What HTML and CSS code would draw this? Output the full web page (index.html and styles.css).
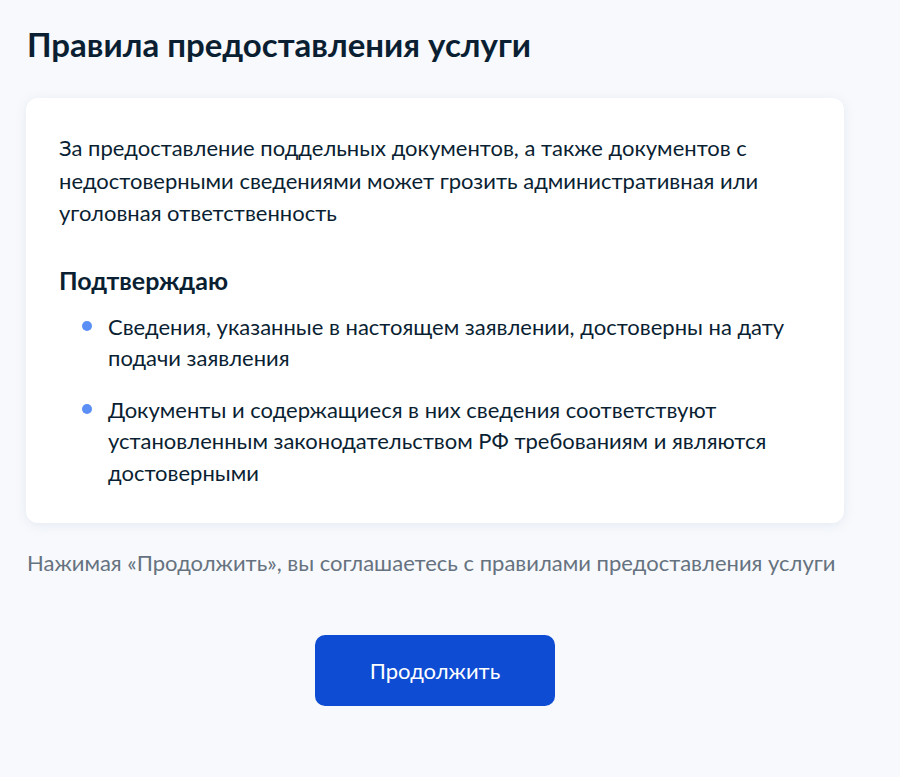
FILE: index.html
```html
<!DOCTYPE html>
<html lang="ru">
<head>
<meta charset="utf-8">
<link rel="stylesheet" href="styles.css">
</head>
<body>
<main class="page">
  <h1 class="title">Правила предоставления услуги</h1>
  <section class="card">
    <p class="warn">За предоставление поддельных документов, а также документов с недостоверными сведениями может грозить административная или уголовная ответственность</p>
    <h2 class="sub">Подтверждаю</h2>
    <ul class="list">
      <li>Сведения, указанные в настоящем заявлении, достоверны на дату подачи заявления</li>
      <li>Документы и содержащиеся в них сведения соответствуют установленным законодательством РФ требованиям и являются достоверными</li>
    </ul>
  </section>
  <p class="note">Нажимая «Продолжить», вы соглашаетесь с правилами предоставления услуги</p>
  <div class="actions">
    <button class="btn">Продолжить</button>
  </div>
</main>
</body>
</html>
```
FILE: styles.css
```css
html, body {
  margin: 0;
  padding: 0;
}
body {
  background: #f7f9fc;
  font-family: Lato, "Noto Sans", sans-serif;
  color: #0b1f33;
  width: 900px;
  height: 777px;
  overflow: hidden;
}
.page {
  padding: 22px 56px 0 26px;
}
.title {
  margin: 0 0 0 1px;
  font-size: 33px;
  font-weight: 700;
  line-height: 44px;
}
.card {
  margin-top: 32px;
  background: #fff;
  border-radius: 12px;
  box-shadow: 0 2px 12px rgba(160, 175, 200, 0.2);
  padding: 34px 33px 35px 33px;
}
.warn {
  margin: 0;
  font-size: 22px;
  line-height: 32.5px;
}
.sub {
  margin: 34px 0 15px;
  font-size: 25px;
  font-weight: 700;
  line-height: 32px;
}
.list {
  margin: 0;
  padding: 0;
  list-style: none;
}
.list li {
  position: relative;
  padding-left: 49px;
  font-size: 22px;
  line-height: 31.5px;
  margin-bottom: 20px;
}
.list li:last-child {
  margin-bottom: 0;
}
.list li::before {
  content: "";
  position: absolute;
  left: 23px;
  top: 10px;
  width: 10px;
  height: 10px;
  border-radius: 50%;
  background: #5b8ff5;
}
.note {
  margin: 24px 0 0 1px;
  font-size: 22px;
  line-height: 32px;
  color: #66727f;
}
.actions {
  display: flex;
  justify-content: center;
  margin-top: 56px;
}
.btn {
  width: 240px;
  height: 71px;
  border: 0;
  border-radius: 10px;
  background: #0d4cd3;
  color: #fff;
  font-family: Lato, "Noto Sans", sans-serif;
  font-size: 22px;
  font-weight: 400;
}
```
